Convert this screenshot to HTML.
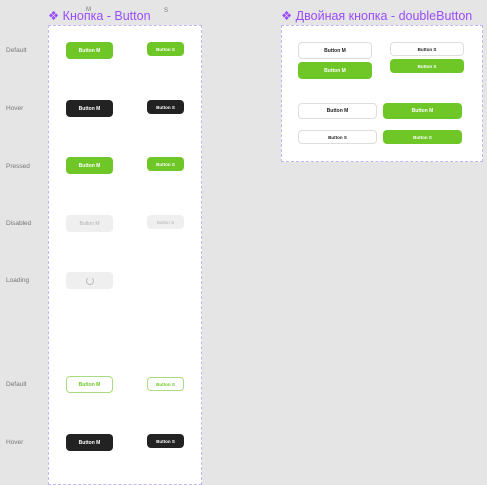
<!DOCTYPE html><html><head><style>
body{margin:0;width:487px;height:466px;background:#e5e5e5;position:relative;overflow:hidden;font-family:"Liberation Sans","DejaVu Sans",sans-serif}
.a{position:absolute}
.frame{position:absolute;background:#fff;border:1px dashed #c4b3f5;box-sizing:border-box}
.lbl{position:absolute;left:6px;font-size:6.5px;color:#777}
.t{position:absolute;font-size:12.5px;color:#9a4dfa;white-space:nowrap}
.b{position:absolute;box-sizing:border-box;border-radius:4px;display:flex;align-items:center;justify-content:center;font-size:5px;font-weight:bold;white-space:nowrap}
.g{background:#6fc727;color:#fff}
.k{background:#222;color:#fff}
.d{background:#efefef;color:#b0b0b0;font-weight:normal}
.w{background:#fff;border:1px solid #ddd;color:#222}
.o{background:#fff;border:1px solid #a8dc80;color:#6fc727}
.M{width:47px;height:17px}.S{width:37px;height:14px;font-size:4.5px}
</style></head><body>
<div class="a" style="left:86px;top:7px;font-size:6px;color:#777">M</div>
<div class="a" style="left:164px;top:8px;font-size:6px;color:#777">S</div>
<div class="t" style="left:48px;top:8px">❖ Кнопка - Button</div>
<div class="t" style="left:281px;top:8px">❖ Двойная кнопка - doubleButton</div>
<div class="frame" style="left:48px;top:25px;width:154px;height:460px"></div>
<div class="frame" style="left:281px;top:25px;width:202px;height:137px"></div>
<div class="lbl" style="top:47px">Default</div>
<div class="lbl" style="top:105px">Hover</div>
<div class="lbl" style="top:163px">Pressed</div>
<div class="lbl" style="top:220px">Disabled</div>
<div class="lbl" style="top:277px">Loading</div>
<div class="lbl" style="top:381px">Default</div>
<div class="lbl" style="top:439px">Hover</div>
<div class="b g M" style="left:66px;top:42px">Button M</div>
<div class="b g S" style="left:147px;top:42px">Button S</div>
<div class="b k M" style="left:66px;top:100px">Button M</div>
<div class="b k S" style="left:147px;top:100px">Button S</div>
<div class="b g M" style="left:66px;top:157px">Button M</div>
<div class="b g S" style="left:147px;top:157px">Button S</div>
<div class="b d M" style="left:66px;top:215px">Button M</div>
<div class="b d S" style="left:147px;top:215px">Button S</div>
<div class="b d M" style="left:66px;top:272px"><div style="width:6px;height:6px;border:1px solid #bbb;border-top-color:transparent;border-radius:50%"></div></div>
<div class="b o M" style="left:66px;top:376px">Button M</div>
<div class="b o S" style="left:147px;top:377px">Button S</div>
<div class="b k M" style="left:66px;top:434px">Button M</div>
<div class="b k S" style="left:147px;top:434px">Button S</div>
<div class="b w" style="left:298px;top:42px;width:74px;height:17px">Button M</div>
<div class="b g" style="left:298px;top:62px;width:74px;height:17px">Button M</div>
<div class="b w" style="left:390px;top:42px;width:74px;height:14px;font-size:4.5px">Button S</div>
<div class="b g" style="left:390px;top:59px;width:74px;height:14px;font-size:4.5px">Button S</div>
<div class="b w" style="left:298px;top:103px;width:79px;height:16px">Button M</div>
<div class="b g" style="left:383px;top:103px;width:79px;height:16px">Button M</div>
<div class="b w" style="left:298px;top:130px;width:79px;height:14px;font-size:4.5px">Button S</div>
<div class="b g" style="left:383px;top:130px;width:79px;height:14px;font-size:4.5px">Button S</div>
</body></html>
